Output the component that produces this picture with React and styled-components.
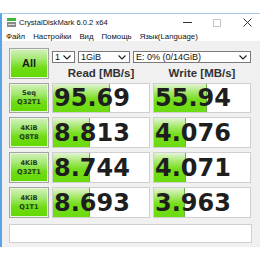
import React from "react"
import styled, { createGlobalStyle } from "styled-components"

const GlobalStyle = createGlobalStyle`
  html, body {
    margin: 0;
    padding: 0;
    background: #ffffff;
    overflow: hidden;
  }
`

const rows = [
  { top: "Seq", bottom: "Q32T1", read: "95.69", write: "55.94", r: 58, w: 54 },
  { top: "4KiB", bottom: "Q8T8", read: "8.813", write: "4.076", r: 37, w: 32 },
  { top: "4KiB", bottom: "Q32T1", read: "8.744", write: "4.071", r: 37, w: 32 },
  { top: "4KiB", bottom: "Q1T1", read: "8.693", write: "3.963", r: 38, w: 31 },
]

const menus = ["Файл", "Настройки", "Вид", "Помощь", "Язык(Language)"]

const Chevron = () => (
  <svg width="8" height="5" viewBox="0 0 8 5">
    <path d="M0.5 0.5 L4 4 L7.5 0.5" fill="none" stroke="#222" strokeWidth="1.2" />
  </svg>
)

const AppIcon = () => (
  <svg width="9" height="9" viewBox="0 0 9 9">
    <rect x="0" y="0" width="9" height="3" fill="#3cb93c" />
    <rect x="0" y="4" width="9" height="5" fill="#8a8a8a" />
    <rect x="1" y="6" width="7" height="1" fill="#d8d8d8" />
  </svg>
)

const App = () => {
  return (
    <>
      <GlobalStyle />
      <Window>
        <TitleBar>
          <AppIcon />
          <Title>CrystalDiskMark 6.0.2 x64</Title>
          <Controls>
            <Ctrl>
              <svg width="9" height="1" viewBox="0 0 9 1">
                <rect width="9" height="1" fill="#333" />
              </svg>
            </Ctrl>
            <Ctrl>
              <svg width="8" height="8" viewBox="0 0 8 8">
                <rect x="0.5" y="0.5" width="7" height="7" fill="none" stroke="#c4c4c4" />
              </svg>
            </Ctrl>
            <Ctrl>
              <svg width="9" height="9" viewBox="0 0 9 9">
                <path d="M0.5 0.5 L8.5 8.5 M8.5 0.5 L0.5 8.5" stroke="#333" strokeWidth="1" />
              </svg>
            </Ctrl>
          </Controls>
        </TitleBar>
        <MenuBar>
          {menus.map(m => (
            <MenuItem key={m}>{m}</MenuItem>
          ))}
        </MenuBar>
        <Body>
          <Grid>
            <TestButton $big>All</TestButton>
            <TopCell>
              <Selects>
                <Select $w={23}>
                  <span>1</span>
                  <Chevron />
                </Select>
                <Select $w={52}>
                  <span>1GiB</span>
                  <Chevron />
                </Select>
                <Select $grow>
                  <span>E: 0% (0/14GiB)</span>
                  <Chevron />
                </Select>
              </Selects>
              <Headers>
                <Header>Read [MB/s]</Header>
                <Header>Write [MB/s]</Header>
              </Headers>
            </TopCell>
            {rows.map((row, i) => (
              <React.Fragment key={i}>
                <TestButton>
                  <span>{row.top}</span>
                  <span>{row.bottom}</span>
                </TestButton>
                <Result>
                  <Fill style={{ width: `${row.r}%` }} />
                  <Value>{row.read}</Value>
                </Result>
                <Result>
                  <Fill style={{ width: `${row.w}%` }} />
                  <Value>{row.write}</Value>
                </Result>
              </React.Fragment>
            ))}
          </Grid>
          <Comment />
        </Body>
      </Window>
    </>
  )
}

const Window = styled.div`
  margin-top: 13px;
  width: 262px;
  height: 234px;
  box-sizing: border-box;
  border-left: 2px solid #5ba3e5;
  border-top: 1px solid #a9c9ea;
  background: #f0f0f0;
  display: flex;
  flex-direction: column;
  font-family: "Liberation Sans", Arial, sans-serif;
  color: #111;
`

const TitleBar = styled.div`
  height: 17px;
  background: #ffffff;
  display: flex;
  align-items: center;
  padding-left: 5px;
`

const Title = styled.div`
  margin-left: 3px;
  font-size: 7.6px;
  color: #111;
`

const Controls = styled.div`
  margin-left: auto;
  display: flex;
  height: 100%;
`

const Ctrl = styled.div`
  width: 30px;
  display: flex;
  align-items: center;
  justify-content: center;
`

const MenuBar = styled.div`
  height: 10px;
  background: #ffffff;
  display: flex;
  align-items: center;
  gap: 8px;
  padding-left: 4px;
  font-size: 7.8px;
`

const MenuItem = styled.span`
  color: #111;
`

const Body = styled.div`
  flex: 1;
  padding: 7px 0 0 7px;
`

const Grid = styled.div`
  display: grid;
  grid-template-columns: 40px 98px 98px;
  grid-template-rows: 31px 30px 31px 31px 31px;
  column-gap: 3px;
  row-gap: 4px;
`

const TestButton = styled.div`
  box-sizing: border-box;
  border: 1px solid #a4a4a4;
  box-shadow: inset 0 0 0 1px #e6f7da;
  background: linear-gradient(to bottom, #d3f1bd 0%, #a4e872 35%, #6fdc16 65%, #62d800 100%);
  display: flex;
  flex-direction: column;
  align-items: center;
  justify-content: center;
  font-family: "DejaVu Sans", sans-serif;
  font-weight: bold;
  font-size: ${p => (p.$big ? "11px" : "6.6px")};
  line-height: ${p => (p.$big ? "1" : "1.3")};
  color: #253a20;
  ${p => p.$big && `font-family: "Liberation Sans", Arial, sans-serif; color: #1a1a1a;`}
`

const TopCell = styled.div`
  grid-column: 2 / 4;
  display: flex;
  flex-direction: column;
  padding-top: 3px;
`

const Selects = styled.div`
  display: flex;
  gap: 3px;
`

const Select = styled.div`
  box-sizing: border-box;
  height: 12px;
  width: ${p => (p.$w ? `${p.$w}px` : "auto")};
  flex: ${p => (p.$grow ? "1" : "none")};
  border: 1px solid #7a7a7a;
  background: #ffffff;
  display: flex;
  align-items: center;
  justify-content: space-between;
  padding: 0 3px 0 2px;
  font-size: 9px;
  color: #111;
`

const Headers = styled.div`
  display: grid;
  grid-template-columns: 98px 98px;
  column-gap: 3px;
  margin-top: 3px;
`

const Header = styled.div`
  text-align: center;
  font-weight: bold;
  font-size: 11.5px;
  line-height: 14px;
  color: #333;
`

const Result = styled.div`
  position: relative;
  box-sizing: border-box;
  border: 1px solid #cfcfcf;
  background: #ffffff;
  overflow: hidden;
  display: flex;
  align-items: center;
`

const Fill = styled.div`
  position: absolute;
  left: 0;
  top: 0;
  bottom: 0;
  background: linear-gradient(to bottom, #e4f4d6 0%, #a6e86a 30%, #76de1c 55%, #6cdb10 100%);
  border-right: 1px solid #6fb04a;
`

const Value = styled.div`
  position: relative;
  padding-left: 1px;
  font-family: "DejaVu Sans", sans-serif;
  font-weight: bold;
  font-size: 24px;
  line-height: 1;
  color: #1e1e1e;
`

const Comment = styled.div`
  box-sizing: border-box;
  width: 243px;
  height: 19px;
  margin-top: 6px;
  border: 1px solid #cfcfcf;
  background: #ffffff;
`

export default App
